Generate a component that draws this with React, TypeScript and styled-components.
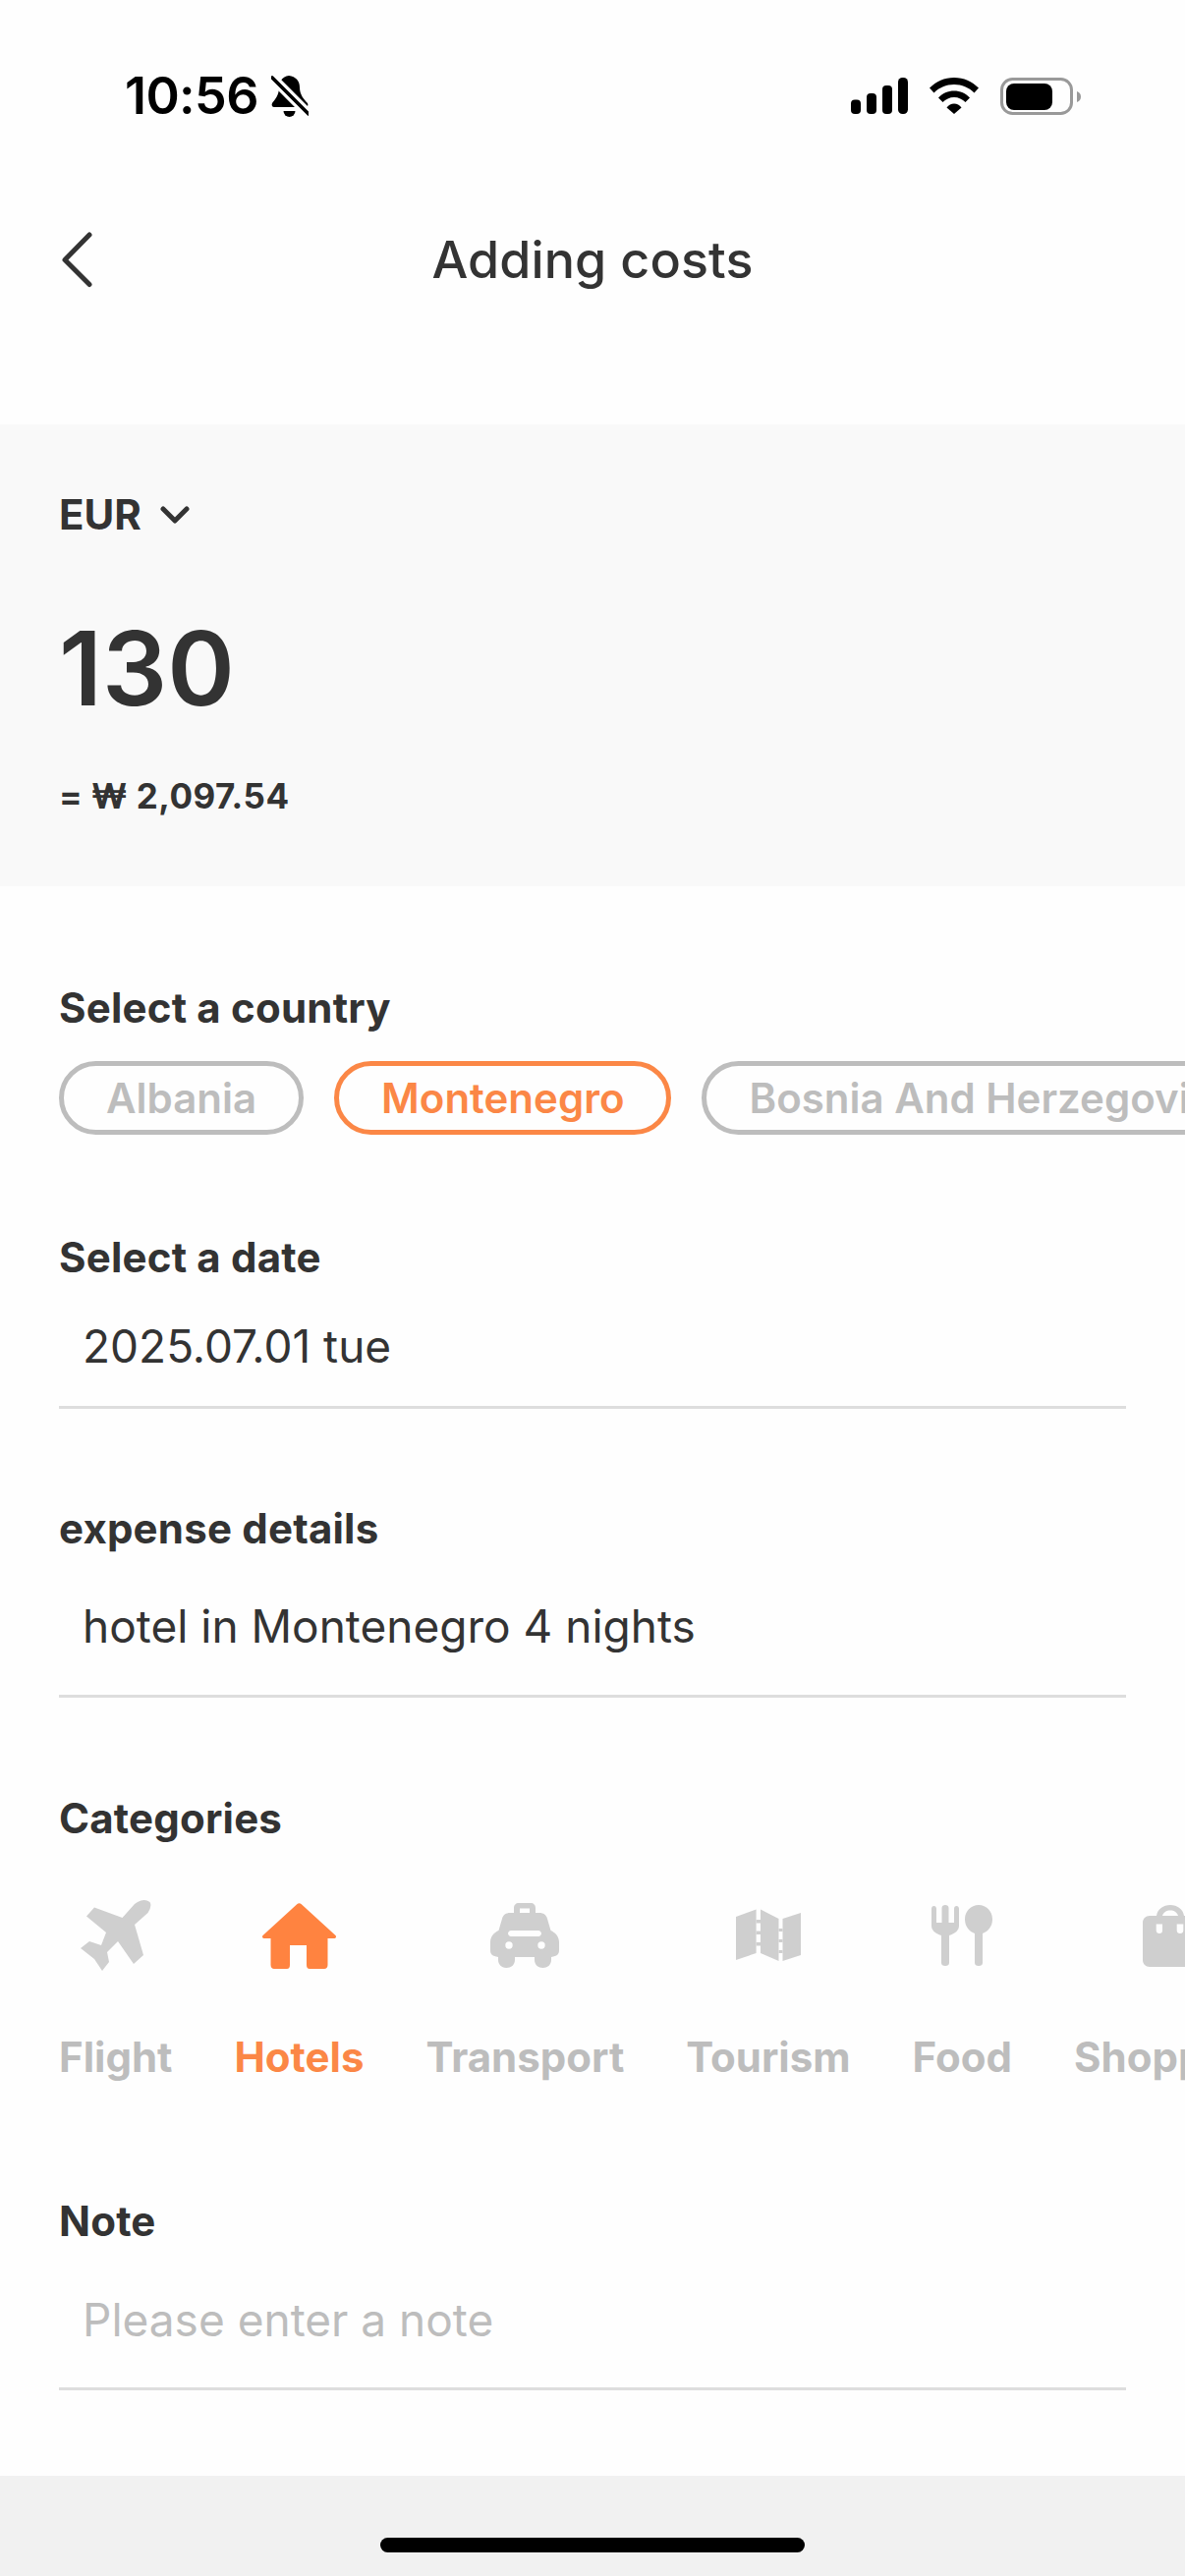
import React from "react";
import styled, { createGlobalStyle } from "styled-components";

const Global = createGlobalStyle`
  html, body { margin: 0; padding: 0; background: #fff; }
  * { box-sizing: border-box; }
  body { font-family: Inter, "Noto Sans", "Liberation Sans", sans-serif; color: #333; }
`;

const Page = styled.div`
  width: 1206px;
  height: 2622px;
  display: flex;
  flex-direction: column;
  overflow: hidden;
  background: #fefefe;
`;

const StatusBar = styled.div`
  display: flex;
  justify-content: space-between;
  align-items: center;
  height: 128px;
  padding: 67px 106px 0 127px;
  color: #000;
`;
const StatusLeft = styled.div`
  display: flex;
  align-items: center;
  gap: 13px;
`;
const Clock = styled.span`
  font-size: 52px;
  font-weight: 600;
  line-height: 60px;
  letter-spacing: -0.6px;
`;
const StatusRight = styled.div`
  display: flex;
  align-items: center;
  gap: 22px;
`;

const Header = styled.header`
  display: grid;
  grid-template-columns: 1fr auto 1fr;
  align-items: center;
  height: 304px;
  padding: 107px 60px 137px;
`;
const Title = styled.h1`
  margin: 0;
  font-size: 52px;
  font-weight: 500;
  line-height: 60px;
  letter-spacing: 0.1px;
  color: #333;
`;

const AmountPanel = styled.section`
  height: 470px;
  padding: 67px 60px 0;
  background: #f9f9f9;
`;
const CurrencyRow = styled.div`
  display: flex;
  align-items: center;
  gap: 19px;
  font-size: 42px;
  font-weight: 700;
  line-height: 50px;
`;
const Amount = styled.div`
  margin-top: 71px;
  font-size: 104px;
  font-weight: 600;
  line-height: 120px;
`;
const Converted = styled.div`
  margin-top: 48px;
  font-size: 35px;
  font-weight: 700;
  line-height: 44px;
  letter-spacing: 0.5px;
`;

const Form = styled.div`
  display: flex;
  flex-direction: column;
  flex: 1;
`;
const Section = styled.section<{ $top: number }>`
  margin-top: ${(p) => p.$top}px;
  padding-left: 60px;
`;
const Label = styled.div`
  font-size: 42px;
  font-weight: 700;
  line-height: 44px;
  letter-spacing: 0.2px;
  color: #333;
`;
const Field = styled.div<{ $top: number; $bottom: number; $placeholder?: boolean }>`
  width: 1086px;
  margin-top: ${(p) => p.$top}px;
  padding: 0 24px ${(p) => p.$bottom}px;
  font-size: 46px;
  font-weight: 400;
  line-height: 60px;
  border-bottom: 3px solid #ddd;
  color: ${(p) => (p.$placeholder ? "#bdbdbd" : "#333")};
`;

const ChipRow = styled.div`
  display: flex;
  gap: 31px;
  margin-top: 32px;
  overflow: hidden;
`;
const Chip = styled.div<{ $active?: boolean }>`
  flex-shrink: 0;
  height: 75px;
  padding: 0 43px;
  display: flex;
  align-items: center;
  border-radius: 38px;
  border: 5px solid ${(p) => (p.$active ? "#fb8746" : "#bdbdbd")};
  color: ${(p) => (p.$active ? "#fb8746" : "#bdbdbd")};
  font-size: 42px;
  font-weight: 600;
  white-space: nowrap;
`;

const CategoryRow = styled.div`
  display: flex;
  gap: 63px;
  margin-top: 59px;
  overflow: hidden;
`;
const Category = styled.div`
  flex-shrink: 0;
  display: flex;
  flex-direction: column;
  align-items: center;
`;
const CategoryIcon = styled.div<{ $active?: boolean }>`
  height: 76px;
  display: flex;
  align-items: center;
  justify-content: center;
  color: ${(p) => (p.$active ? "#ff8340" : "#cfcfcf")};
`;
const CategoryName = styled.div<{ $active?: boolean }>`
  margin-top: 62px;
  font-size: 42px;
  font-weight: 700;
  line-height: 48px;
  white-space: nowrap;
  color: ${(p) => (p.$active ? "#fb8746" : "#bdbdbd")};
`;

const Footer = styled.footer`
  height: 102px;
  padding-top: 63px;
  display: flex;
  justify-content: center;
  background: #f1f1f1;
`;
const HomeBar = styled.div`
  width: 432px;
  height: 15px;
  border-radius: 8px;
  background: #000;
`;

const BellOff = () => (
  <svg width="38" height="42" viewBox="0 0 38 42">
    <path
      fill="#000"
      d="M18 0C11 1 8 6 8 12C8 20 4 24 1 28C0 30 1 32 3 32H35C37 32 38 30 37 28C33 24 29 19 29 12C29 5 25 1 18 0Z"
    />
    <path fill="#000" d="M12.5 36a6 6 0 0 0 12 0Z" />
    <path d="M0 1L38 39" stroke="#fff" strokeWidth="10" />
    <path d="M1 2L38 39" stroke="#000" strokeWidth="3.6" strokeLinecap="round" />
  </svg>
);

const Signal = () => (
  <svg width="58" height="37" viewBox="0 0 58 37" fill="#000">
    <rect x="0" y="22.5" width="10" height="14.5" rx="4" />
    <rect x="16" y="16" width="10" height="21" rx="4" />
    <rect x="32" y="8" width="10" height="29" rx="4" />
    <rect x="48" y="0" width="10" height="37" rx="4.5" />
  </svg>
);

const Wifi = () => (
  <svg width="50" height="37" viewBox="0 0 50 37" fill="#000">
    <path d="M0 10.5C7 4 15 0 25 0C35 0 43 4 50 10.5L45.5 15.5C40 10 33 7 25 7C17 7 10 10 4.5 15.5Z" />
    <path d="M9 20.5C13 16 19 13.5 25 13.5C31 13.5 37 16 41 20.5L36.5 25C33.5 22 29.5 20 25 20C20.5 20 16.5 22 13.5 25Z" />
    <path d="M17.5 30.5C19.5 28 22 26.5 25 26.5C28 26.5 30.5 28 32.5 30.5L25 37Z" />
  </svg>
);

const Battery = () => (
  <svg width="82" height="38" viewBox="0 0 82 38">
    <rect x="1.5" y="1.5" width="71" height="35" rx="11" fill="none" stroke="#999" strokeWidth="3" />
    <rect x="6" y="6" width="47" height="27" rx="8" fill="#000" />
    <path d="M78 14C81 15 82 17 82 19.5C82 22 81 24 78 25Z" fill="#999" />
  </svg>
);

const BackArrow = () => (
  <svg width="36" height="60" viewBox="0 0 36 60" fill="none">
    <path
      d="M31 4L6 29.5L31 54.5"
      stroke="#333"
      strokeWidth="5"
      strokeLinecap="round"
      strokeLinejoin="round"
    />
  </svg>
);

const CaretDown = () => (
  <svg width="30" height="18" viewBox="0 0 30 18" fill="none">
    <path d="M3 3L15 15L27 3" stroke="#333" strokeWidth="5" strokeLinecap="round" strokeLinejoin="round" />
  </svg>
);

const PlaneIcon = () => (
  <svg width="72" height="72" viewBox="0 0 72 72" fill="currentColor">
    <path d="M55 4L42.5 18L14 7.5L6 16.5L26 33L21 46L9 42L0 49L14 60L22 72L29 63L27 53L38 42L54 65L64 56L55 25L68.5 13Q73 6 70.5 2Q65 -2 58 2Z" />
  </svg>
);

const HouseIcon = () => (
  <svg width="75" height="67" viewBox="0 0 75 67" fill="currentColor">
    <path d="M35.5 1C36.6 0 38.4 0 39.5 1L74.5 33C75.5 34 75 36 73.5 36H66.5V63C66.5 65.5 65 67 63 67H48C46 67 45 65.5 45 63V43H28V63C28 65.5 27 67 25 67H12C10 67 8.5 65.5 8.5 63V36H1.5C0 36 -0.5 34 0.5 33Z" />
  </svg>
);

const TaxiIcon = () => (
  <svg width="70" height="66" viewBox="0 0 70 66" fill="currentColor">
    <path
      fillRule="evenodd"
      d="M24 5C24 2 26 0 29 0H41C44 0 46 2 46 5V10H50C54 10 57 12 58 16L61.5 28C66 30 70 34 70 40V48C70 52 68 54 62 55V58C62 63 58 66 53.5 66C49 66 45 63 45 58V55H25V58C25 63 21 66 16.5 66C12 66 8 63 8 58V55C2 54 0 52 0 48V40C0 34 4 30 8.5 28L12 16C13 12 16 10 20 10H24ZM30 5.5V10H40V5.5ZM21 28C19.5 28 18 29.5 18 31C18 32.5 19.5 34 21 34H49C50.5 34 52 32.5 52 31C52 29.5 50.5 28 49 28ZM19 39.3A3.7 3.7 0 1 0 19 46.7A3.7 3.7 0 1 0 19 39.3ZM52 39.3A3.7 3.7 0 1 0 52 46.7A3.7 3.7 0 1 0 52 39.3Z"
    />
  </svg>
);

const MapIcon = () => (
  <svg width="66" height="64" viewBox="0 -5 66 64" fill="currentColor">
    <path d="M0 8L20.6 0.5V45L0 52Z" />
    <path d="M25 0.5L43.5 10V53L25 45Z" />
    <path d="M47.5 10L66 4V47L47.5 53Z" />
    <rect x="20.6" y="11" width="4.4" height="3.5" />
    <rect x="20.6" y="22.5" width="4.4" height="3.5" />
    <rect x="20.6" y="34" width="4.4" height="3.5" />
    <rect x="43.5" y="20" width="4" height="3" />
    <rect x="43.5" y="31" width="4" height="3" />
    <rect x="43.5" y="42" width="4" height="3" />
  </svg>
);

const FoodIcon = () => (
  <svg width="62" height="70" viewBox="0 -4 62 70" fill="currentColor">
    <path d="M0 4C0 2 1 1 2.5 1C4 1 5 2 5 4V18H10.5V3C10.5 1 12 0 14 0C16 0 17.5 1 17.5 3V18H23V4C23 2 24 1 25.5 1C27 1 28 2 28 4V21C28 26 24 29 18 31V59C18 61 16.5 62 14 62C11.5 62 10 61 10 59V31C4 29 0 26 0 21Z" />
    <path d="M48 0C56 0 62 6.5 62 14.5C62 22 57.5 27 52 29V59C52 61 50.5 62 48 62C45.5 62 44 61 44 59V29C38.5 27 34 22 34 14.5C34 6.5 40 0 48 0Z" />
  </svg>
);

const BagIcon = () => (
  <svg width="56" height="63" viewBox="0 0 56 63" fill="currentColor">
    <path
      fillRule="evenodd"
      d="M14 11C15 4 21 0 28 0C35 0 41 4 42 11H49C53 11 56 14 56 18V56C56 60 53 63 49 63H7C3 63 0 60 0 56V18C0 14 3 11 7 11ZM20 11H36C35 7.5 32 5.5 28 5.5C24 5.5 21 7.5 20 11ZM13.7 19.5V26C13.7 28 15 29 17 29C19 29 20 28 20 26V19.5ZM34.7 19.5V26C34.7 28 36 29 38 29C40 29 41.3 28 41.3 26V19.5Z"
    />
  </svg>
);

const categories: { name: string; icon: React.ReactNode; active?: boolean }[] = [
  { name: "Flight", icon: <PlaneIcon /> },
  { name: "Hotels", icon: <HouseIcon />, active: true },
  { name: "Transport", icon: <TaxiIcon /> },
  { name: "Tourism", icon: <MapIcon /> },
  { name: "Food", icon: <FoodIcon /> },
  { name: "Shopping", icon: <BagIcon /> },
];

export default function App() {
  return (
    <Page>
      <Global />
      <StatusBar>
        <StatusLeft>
          <Clock>10:56</Clock>
          <BellOff />
        </StatusLeft>
        <StatusRight>
          <Signal />
          <Wifi />
          <Battery />
        </StatusRight>
      </StatusBar>

      <Header>
        <BackArrow />
        <Title>Adding costs</Title>
      </Header>

      <AmountPanel>
        <CurrencyRow>
          EUR
          <CaretDown />
        </CurrencyRow>
        <Amount>130</Amount>
        <Converted>= ₩ 2,097.54</Converted>
      </AmountPanel>

      <Form>
        <Section $top={102}>
          <Label>Select a country</Label>
          <ChipRow>
            <Chip>Albania</Chip>
            <Chip $active>Montenegro</Chip>
            <Chip>Bosnia And Herzegovina</Chip>
          </ChipRow>
        </Section>

        <Section $top={103}>
          <Label>Select a date</Label>
          <Field $top={38} $bottom={31}>2025.07.01 tue</Field>
        </Section>

        <Section $top={100}>
          <Label>expense details</Label>
          <Field $top={47} $bottom={40}>hotel in Montenegro 4 nights</Field>
        </Section>

        <Section $top={101}>
          <Label>Categories</Label>
          <CategoryRow>
            {categories.map((c) => (
              <Category key={c.name}>
                <CategoryIcon $active={c.active}>{c.icon}</CategoryIcon>
                <CategoryName $active={c.active}>{c.name}</CategoryName>
              </Category>
            ))}
          </CategoryRow>
        </Section>

        <Section $top={121}>
          <Label>Note</Label>
          <Field $top={48} $bottom={39} $placeholder>Please enter a note</Field>
        </Section>
      </Form>

      <Footer>
        <HomeBar />
      </Footer>
    </Page>
  );
}
